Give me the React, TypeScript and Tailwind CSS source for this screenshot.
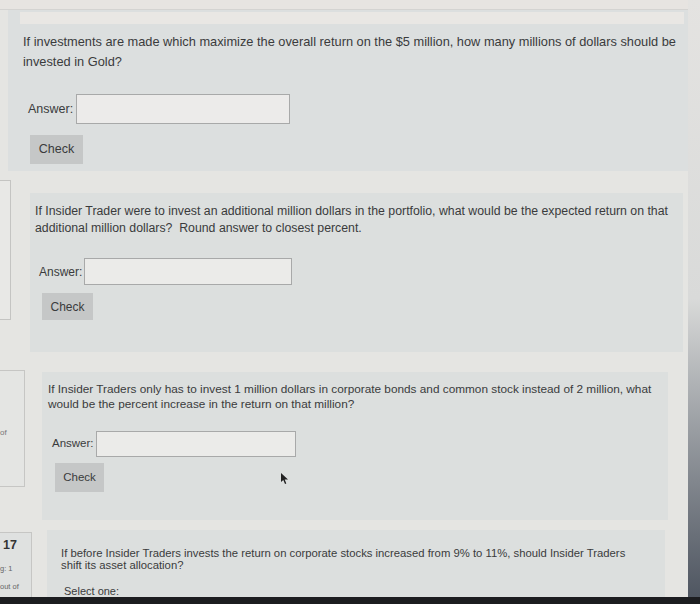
import React from "react";

const font = { fontFamily: '"Liberation Sans", Arial, sans-serif' };

export default function App() {
  return (
    <div className="w-[700px] h-[604px] overflow-hidden bg-[#e5e5e2] flex flex-col text-[#3a3b3c]" style={font}>
      <div className="flex flex-1 min-h-0 overflow-hidden">
        <div className="flex-1 flex flex-col">
          {/* top strip */}
          <div className="shrink-0 h-[10px] bg-[#e7e4e1] border-b border-[#d4d3d1]" />
          {/* Panel 1 */}
          <div className="shrink-0 ml-[8px] w-[680px] h-[161px] bg-[#dcdfdf] flex flex-col">
            <div className="ml-[12px] mr-[4px] mt-[2px] h-[12px] bg-[#e9e7e4]" />
            <div className="pl-[15px] pt-[8px] text-[12.8px] leading-[20px]">
              <p>If investments are made which maximize the overall return on the $5 million, how many millions of dollars should be</p>
              <p>invested in Gold?</p>
            </div>
            <div className="flex items-center mt-[22px] pl-[20px]">
              <span className="text-[12.5px] mr-[3px]">Answer:</span>
              <div className="w-[214px] h-[30px] bg-[#ecebea] border border-[#a8a9a9]" />
            </div>
            <div className="ml-[22px] mt-[11px] w-[53px] h-[29px] bg-[#c5c7c7] flex items-center justify-center text-[12.5px]">Check</div>
          </div>

          {/* Row 2 */}
          <div className="shrink-0 flex items-start mt-[9px]">
            <div className="w-[11px] h-[140px] bg-[#e8e8e6] border-r border-y border-[#c4c4c2]" />
            <div className="ml-[19px] mt-[13px] w-[653px] h-[159px] bg-[#dcdfde] flex flex-col">
              <div className="pl-[5px] pt-[10px] text-[12.3px] leading-[17px]">
                <p>If Insider Trader were to invest an additional million dollars in the portfolio, what would be the expected return on that</p>
                <p>additional million dollars?&nbsp; Round answer to closest percent.</p>
              </div>
              <div className="flex items-center mt-[21px] pl-[9px]">
                <span className="text-[12px] mr-[2px]">Answer:</span>
                <div className="w-[208px] h-[27px] bg-[#ebebe9] border border-[#a8a9a9]" />
              </div>
              <div className="ml-[12px] mt-[8px] w-[51px] h-[27px] bg-[#c5c7c7] flex items-center justify-center text-[12px]">Check</div>
            </div>
          </div>

          {/* Row 3 */}
          <div className="shrink-0 flex items-start mt-[20px]">
            <div className="w-[25px] h-[117px] mt-[-2px] bg-[#e4e5e3] border-r border-y border-[#c6c6c4] relative">
              <span className="absolute left-0 top-[56px] text-[8px] text-[#777]">of</span>
            </div>
            <div className="ml-[17px] w-[626px] h-[148px] bg-[#dcdfde] flex flex-col">
              <div className="pl-[6px] pt-[10px] text-[11.8px] leading-[15px]">
                <p>If Insider Traders only has to invest 1 million dollars in corporate bonds and common stock instead of 2 million, what</p>
                <p>would be the percent increase in the return on that million?</p>
              </div>
              <div className="flex items-center mt-[19px] pl-[10px]">
                <span className="text-[11.5px] mr-[2px]">Answer:</span>
                <div className="w-[200px] h-[26px] bg-[#ebebe9] border border-[#a8a9a9]" />
              </div>
              <div className="flex items-center mt-[6px]">
                <div className="ml-[13px] w-[49px] h-[29px] bg-[#c5c7c7] flex items-center justify-center text-[11.5px]">Check</div>
                <svg className="ml-[176px] mt-[3px]" width="10" height="12" viewBox="0 0 10 12">
                  <path d="M1 0 L1 9 L3.3 7 L5 11 L6.3 10.4 L4.7 6.6 L8 6.4 Z" fill="#222" />
                </svg>
              </div>
            </div>
          </div>

          {/* Row 4 */}
          <div className="shrink-0 flex items-start mt-[10px]">
            <div className="w-[32px] h-[80px] mt-[2px] bg-[#dfe1e0] border-r border-t border-[#c6c6c4] flex flex-col">
              <span className="pl-[3px] mt-[4px] text-[12.5px] font-bold leading-[16px] text-[#333]">17</span>
              <span className="mt-[11px] text-[7.5px] leading-[10px] text-[#666]">g: 1</span>
              <span className="mt-[8px] text-[7.5px] leading-[10px] text-[#666]">out of</span>
            </div>
            <div className="ml-[15px] w-[618px] h-[80px] bg-[#dcdfde] flex flex-col">
              <div className="pl-[14px] pt-[17px] text-[11.3px] leading-[12px]">
                <p>If before Insider Traders invests the return on corporate stocks increased from 9% to 11%, should Insider Traders</p>
                <p>shift its asset allocation?</p>
              </div>
              <p className="pl-[17px] mt-[14px] text-[11px] leading-[12px]">Select one:</p>
            </div>
          </div>
        </div>
        {/* right edge of the screen */}
        <div className="w-[18px] bg-gradient-to-b from-[#e4e3e1] via-[#d9dad9] to-[#4f5661]" />
      </div>
      <div className="h-[7px] bg-[#1c1d20]" />
    </div>
  );
}
